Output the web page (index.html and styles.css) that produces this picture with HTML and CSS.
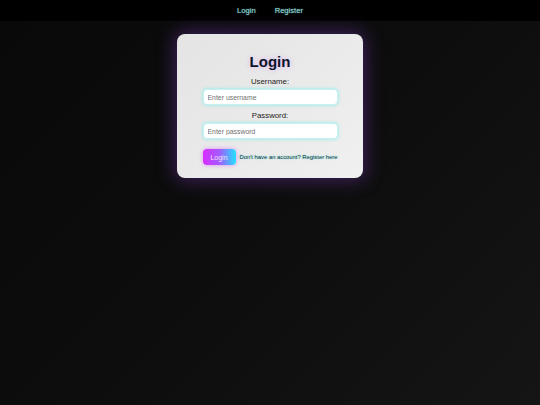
FILE: index.html
```html
<!DOCTYPE html>
<html lang="en">
<head>
<meta charset="utf-8">
<title>Login</title>
<link rel="stylesheet" href="styles.css">
</head>
<body>
  <nav class="navbar">
    <a href="#" class="nav-link">Login</a>
    <a href="#" class="nav-link">Register</a>
  </nav>
  <main class="page">
    <div class="card">
      <h2 class="title">Login</h2>
      <form class="form">
        <label class="label" for="u">Username:</label>
        <input class="input" id="u" type="text" placeholder="Enter username">
        <label class="label label-second" for="p">Password:</label>
        <input class="input" id="p" type="password" placeholder="Enter password">
        <div class="actions">
          <button type="button" class="btn">Login</button>
          <a href="#" class="register-link">Don't have an account? Register here</a>
        </div>
      </form>
    </div>
  </main>
</body>
</html>
```

FILE: styles.css
```css
html, body {
  margin: 0;
  padding: 0;
}
body {
  min-height: 405px;
  font-family: "Liberation Sans", Arial, sans-serif;
  background: linear-gradient(135deg, #090909 0%, #0d0d0d 50%, #151515 100%);
  color: #222;
}
.navbar {
  height: 21px;
  background: #000;
  display: flex;
  justify-content: center;
  align-items: center;
  gap: 19px;
}
.nav-link {
  font-size: 7.6px;
  color: #a6e6e4;
  text-decoration: none;
  text-shadow: 0 0 2px rgba(60, 160, 160, 0.7);
}
.page {
  display: flex;
  justify-content: center;
  padding-top: 12.5px;
}
.card {
  width: 185.5px;
  box-sizing: border-box;
  padding: 19.5px 25px 12.5px;
  border-radius: 8px;
  background: linear-gradient(135deg, #e4e4e4 0%, #ebebeb 60%, #f0f0f0 100%);
  box-shadow: 0 0 18px 3px rgba(125, 60, 190, 0.42);
  display: flex;
  flex-direction: column;
  align-items: center;
}
.title {
  margin: 0;
  font-size: 15px;
  line-height: 17.25px;
  font-weight: bold;
  color: #0a1628;
  text-shadow: 0 0 5px rgba(225, 160, 250, 0.85);
}
.form {
  width: 135px;
  display: flex;
  flex-direction: column;
  align-items: center;
  margin-top: 8.2px;
}
.label {
  font-size: 7.8px;
  line-height: 8.6px;
  color: #1a1a1a;
  margin-bottom: 2.4px;
}
.label-second {
  margin-top: 6.6px;
}
.input {
  width: 135px;
  height: 16px;
  box-sizing: border-box;
  margin: 0;
  padding: 0 4px;
  border: 1px solid #c4f2f2;
  border-radius: 4px;
  background: #fff;
  box-shadow: 0 0 3px 1px rgba(120, 235, 235, 0.5);
  font-family: "Liberation Sans", Arial, sans-serif;
  font-size: 6.9px;
  color: #333;
  outline: none;
}
.input::placeholder {
  color: #707070;
}
.actions {
  align-self: stretch;
  display: flex;
  align-items: center;
  gap: 4px;
  margin-top: 10px;
}
.btn {
  flex: 0 0 33px;
  width: 33px;
  height: 16px;
  padding: 0;
  border: none;
  border-radius: 4px;
  background: linear-gradient(90deg, #d92cff 0%, #a25cff 50%, #20e3ff 100%);
  box-shadow: 0 0 4px rgba(210, 60, 255, 0.55);
  color: #efe4ff;
  font-family: "Liberation Sans", Arial, sans-serif;
  font-size: 7px;
}
.register-link {
  font-size: 5.85px;
  color: #0a3538;
  text-decoration: none;
  white-space: nowrap;
  text-shadow: 0 0 2px rgba(0, 220, 220, 0.55);
}
```
